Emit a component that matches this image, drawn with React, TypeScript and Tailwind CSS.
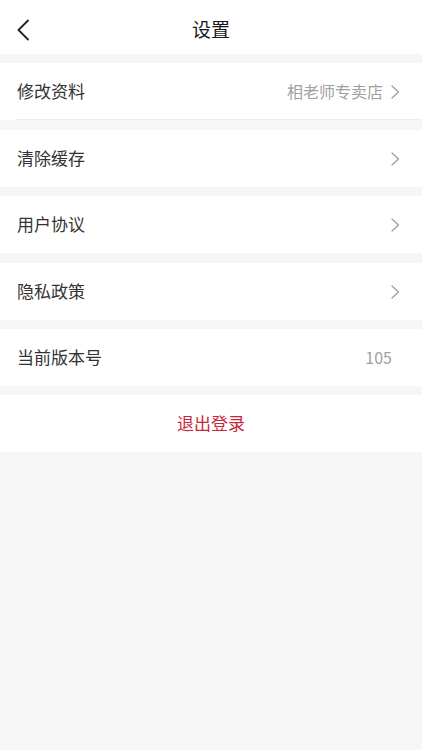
import React from 'react';

const font = { fontFamily: '"Noto Sans CJK SC", "Noto Sans", sans-serif' };

function Chevron() {
    return (
        <svg width="9" height="14" viewBox="0 0 9 14" fill="none" className="ml-[8px]">
            <path d="M1 1L7.5 7L1 13" stroke="#9c9c9c" strokeWidth="1.2" strokeLinecap="round" strokeLinejoin="round" />
        </svg>
    );
}

type Row = { label: string; value?: string; arrow?: boolean; gap: string };

const rows: Row[] = [
    { label: '修改资料', value: '相老师专卖店', arrow: true, gap: 'mt-[9px]' },
    { label: '清除缓存', arrow: true, gap: 'mt-[10px]' },
    { label: '用户协议', arrow: true, gap: 'mt-[9px]' },
    { label: '隐私政策', arrow: true, gap: 'mt-[10px]' },
    { label: '当前版本号', value: '105', gap: 'mt-[9px]' },
];

export default function App() {
    return (
        <div className="w-[422px] h-[750px] bg-[#f6f6f6] overflow-hidden" style={font}>
            {/* 顶部导航 */}
            <div className="h-[54px] bg-white flex items-center relative">
                <svg width="14" height="22" viewBox="0 0 14 22" fill="none" className="absolute left-[16px] top-[19px]">
                    <path d="M12 1.5L2.5 11L12 20.5" stroke="#222" strokeWidth="1.8" strokeLinecap="round" strokeLinejoin="round" />
                </svg>
                <div className="flex-1 text-center text-[19px] text-[#1a1a1a] leading-none pt-[2px]">设置</div>
            </div>

            {rows.map((r, i) => (
                <div key={i} className={`${r.gap} bg-white h-[57px] flex items-center pl-[17px] pr-[22px] ${i === 0 ? 'relative' : ''}`}>
                    <div className="flex-1 text-[17px] text-[#333] pb-[1px]">{r.label}</div>
                    {r.value && (
                        <div className={`text-[16px] text-[#a0a0a0] pb-[1px] ${r.arrow ? '' : 'mr-[8px]'}`}>{r.value}</div>
                    )}
                    {r.arrow && <Chevron />}
                    {i === 0 && <div className="absolute left-[16px] right-0 bottom-0 h-px bg-[#eeeeee]" />}
                </div>
            ))}

            <div className="mt-[9px] bg-white h-[57px] flex items-center justify-center">
                <span className="text-[17px] text-[#c8273b] pb-[1px]">退出登录</span>
            </div>
        </div>
    );
}
